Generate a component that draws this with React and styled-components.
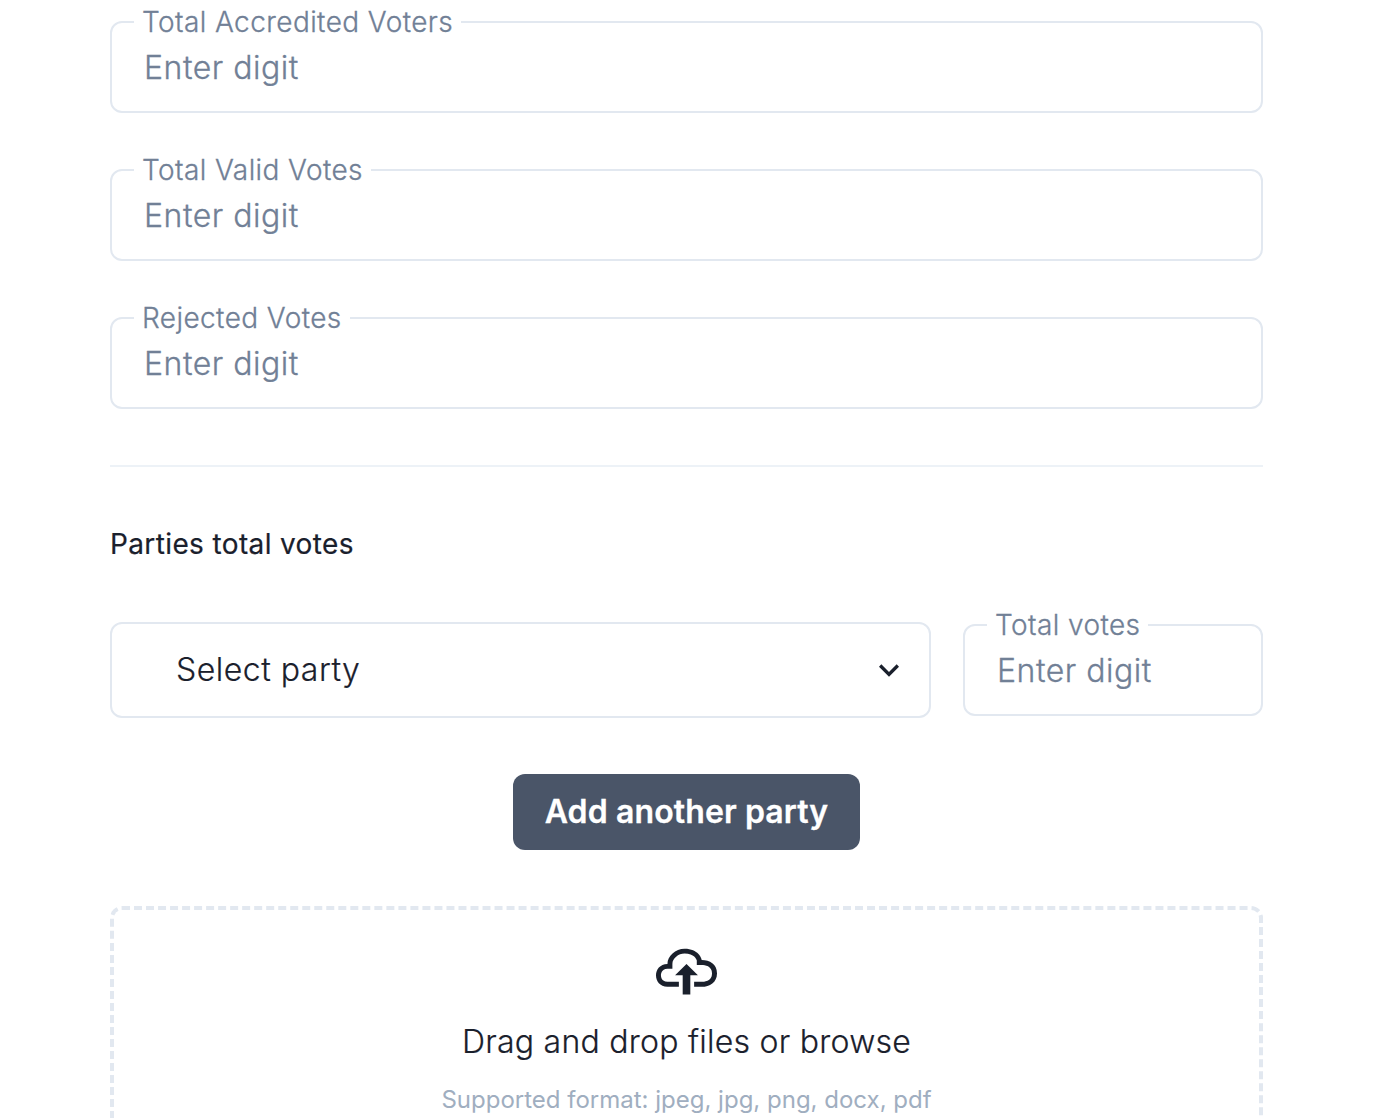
import React, { useState } from "react";
import styled, { createGlobalStyle } from "styled-components";

const voteFields = ["Total Accredited Voters", "Total Valid Votes", "Rejected Votes"];

function NumberField({ label, width }) {
  const [value, setValue] = useState("");

  return (
    <Field $width={width}>
      <Label>{label}</Label>
      <Input
        value={value}
        placeholder="Enter digit"
        onChange={(ev) => setValue(ev.target.value)}
      />
    </Field>
  );
}

function App() {
  return (
    <>
      <GlobalStyle />
      <Wrapper>
        <Fields>
          {voteFields.map((label) => {
            return <NumberField key={label} label={label} />;
          })}
        </Fields>
        <Divider />
        <SectionTitle>Parties total votes</SectionTitle>
        <PartyRow>
          <PartySelect>
            <SelectText>Select party</SelectText>
            <Chevron viewBox="0 0 24 24">
              <path d="M16.59 8.59L12 13.17 7.41 8.59 6 10l6 6 6-6z" />
            </Chevron>
          </PartySelect>
          <NumberField label="Total votes" width="300px" />
        </PartyRow>
        <AddButton>Add another party</AddButton>
        <Dropzone>
          <CloudIcon viewBox="0 0 16 16">
            <path d="M7 9H5l3-3 3 3H9v5H7V9zm5-4c0-.44-.91-3-4.5-3C5.08 2 3 3.92 3 6 1.02 6 0 7.52 0 9c0 1.53 1 3 3 3h3v-1.3H3c-1.62 0-1.7-1.42-1.7-1.7 0-.17.05-1.7 1.7-1.7h1.3V6c0-1.39 1.56-2.7 3.2-2.7 2.55 0 3.13 1.55 3.2 1.8v1.2H12c.81 0 2.7.22 2.7 2.2 0 2.09-2.25 2.2-2.7 2.2h-2V12h2c2.08 0 4-1.16 4-3.5C16 6.06 14.08 5 12 5z" />
          </CloudIcon>
          <DropTitle>Drag and drop files or browse</DropTitle>
          <DropHint>Supported format: jpeg, jpg, png, docx, pdf</DropHint>
        </Dropzone>
      </Wrapper>
    </>
  );
}

const GlobalStyle = createGlobalStyle`
  * {
    box-sizing: border-box;
  }

  body {
    margin: 0;
    background: #fff;
    color: #1a202c;
    font-family: Inter, sans-serif;
    overflow: hidden;
  }
`;

const Wrapper = styled.main`
  display: flex;
  flex-direction: column;
  height: 1118px;
  padding: 21px 131px 0 110px;
  overflow: hidden;
`;

const Fields = styled.div`
  display: flex;
  flex-direction: column;
  gap: 56px;
`;

const Field = styled.label`
  position: relative;
  display: block;
  flex-shrink: 0;
  width: ${(props) => props.$width || "100%"};
  height: 92px;
  border: 2px solid #e2e8f0;
  border-radius: 12px;
`;

const Label = styled.span`
  position: absolute;
  top: -22px;
  left: 22px;
  padding: 0 8px;
  background: #fff;
  color: #718096;
  font-size: 28px;
  font-weight: 300;
  line-height: 42px;
  letter-spacing: 0.41px;
  -webkit-text-stroke: 0.3px;
  white-space: nowrap;
`;

const Input = styled.input`
  width: 100%;
  height: 88px;
  padding: 0 32px;
  border: 0;
  outline: none;
  background: transparent;
  color: #1a202c;
  font-family: inherit;
  font-size: 32px;
  font-weight: 300;
  letter-spacing: 0.5px;

  &::placeholder {
    color: #718096;
    opacity: 1;
    -webkit-text-stroke: 0.3px #718096;
  }
`;

const Divider = styled.hr`
  flex-shrink: 0;
  width: 100%;
  height: 2px;
  margin: 56px 0 0;
  border: 0;
  background: #edf2f7;
`;

const SectionTitle = styled.h2`
  margin: 56px 0;
  font-size: 28px;
  font-weight: 400;
  line-height: 43px;
  letter-spacing: 0.37px;
  -webkit-text-stroke: 0.2px;
`;

const PartyRow = styled.div`
  display: flex;
  align-items: center;
  gap: 32px;
`;

const PartySelect = styled.button`
  display: flex;
  align-items: center;
  justify-content: space-between;
  flex: 1;
  height: 96px;
  padding: 0 20px 0 64px;
  border: 2px solid #e2e8f0;
  border-radius: 12px;
  background: #fff;
  color: #1a202c;
  font-family: inherit;
  font-size: 32px;
  font-weight: 300;
  letter-spacing: 0.5px;
`;

const SelectText = styled.span`
  padding-bottom: 2px;
  -webkit-text-stroke: 0.2px;
`;

const Chevron = styled.svg`
  width: 40px;
  height: 40px;
  fill: currentColor;
`;

const AddButton = styled.button`
  align-self: center;
  flex-shrink: 0;
  width: 347px;
  height: 76px;
  margin: 56px 0;
  padding: 0 0 2px;
  border: 0;
  border-radius: 12px;
  background: #4a5568;
  color: #fff;
  font-family: inherit;
  font-size: 32px;
  font-weight: 600;
  letter-spacing: 0.12px;
  -webkit-text-stroke: 0.3px;
`;

const Dropzone = styled.div`
  display: flex;
  flex-direction: column;
  align-items: center;
  flex-shrink: 0;
  height: 300px;
  padding-top: 31.4px;
  border: 4px dashed #e2e8f0;
  border-radius: 12px;
`;

const CloudIcon = styled.svg`
  width: 61px;
  height: 61px;
  fill: currentColor;
`;

const DropTitle = styled.p`
  margin: 15.6px 0 0;
  font-size: 32px;
  font-weight: 300;
  line-height: 48px;
  letter-spacing: 0.25px;
  -webkit-text-stroke: 0.2px;
`;

const DropHint = styled.p`
  margin: 16px 0 0;
  color: #a0aec0;
  font-size: 24px;
  font-weight: 400;
  line-height: 36px;
`;

export default App;
